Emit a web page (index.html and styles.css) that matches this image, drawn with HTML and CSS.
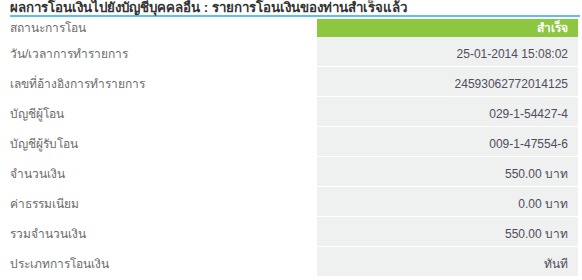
FILE: index.html
```html
<!DOCTYPE html>
<html lang="th">
<head>
<meta charset="utf-8">
<link rel="stylesheet" href="styles.css">
</head>
<body>
<div class="panel">
  <h1 class="title">ผลการโอนเงินไปยังบัญชีบุคคลอื่น : รายการโอนเงินของท่านสำเร็จแล้ว</h1>
  <div class="grid">
    <div class="label first">สถานะการโอน</div>
    <div class="value status">สำเร็จ</div>
    <div class="label">วัน/เวลาการทำรายการ</div>
    <div class="value">25-01-2014 15:08:02</div>
    <div class="label">เลขที่อ้างอิงการทำรายการ</div>
    <div class="value">24593062772014125</div>
    <div class="label">บัญชีผู้โอน</div>
    <div class="value">029-1-54427-4</div>
    <div class="label">บัญชีผู้รับโอน</div>
    <div class="value">009-1-47554-6</div>
    <div class="label">จำนวนเงิน</div>
    <div class="value">550.00 บาท</div>
    <div class="label">ค่าธรรมเนียม</div>
    <div class="value">0.00 บาท</div>
    <div class="label">รวมจำนวนเงิน</div>
    <div class="value">550.00 บาท</div>
    <div class="label">ประเภทการโอนเงิน</div>
    <div class="value">ทันที</div>
  </div>
</div>
</body>
</html>
```

FILE: styles.css
```css
html, body {
  margin: 0;
  padding: 0;
  background: #ffffff;
}
body {
  font-family: "Liberation Sans", "Noto Sans", sans-serif;
  font-size: 12px;
  color: #666666;
}
.panel {
  padding-left: 10px;
  width: 570px;
}
.title {
  margin: 0 0 2px 0;
  height: 15px;
  font-size: 13.3px;
  line-height: 15px;
  font-weight: bold;
  color: #333333;
  border-bottom: 2px solid #5bc1e8;
  white-space: nowrap;
}
.grid {
  display: grid;
  grid-template-columns: 307px 261px;
}
.label {
  height: 23px;
  padding-top: 6px;
  line-height: 23px;
  border-bottom: 1px solid #ffffff;
  color: #6b6b6b;
}
.label.first {
  height: 17px;
  padding-top: 1px;
  line-height: 17px;
  border-bottom: 0;
}
.value {
  height: 23px;
  padding-top: 6px;
  line-height: 23px;
  padding-right: 10px;
  text-align: right;
  background: #eff0f0;
  border-bottom: 1px solid #ffffff;
  color: #4f4d5e;
}
.value.status {
  height: 17px;
  padding-top: 1px;
  line-height: 17px;
  border-bottom: 0;
  background: #8dc63f;
  color: #ffffff;
  font-weight: bold;
}
```
